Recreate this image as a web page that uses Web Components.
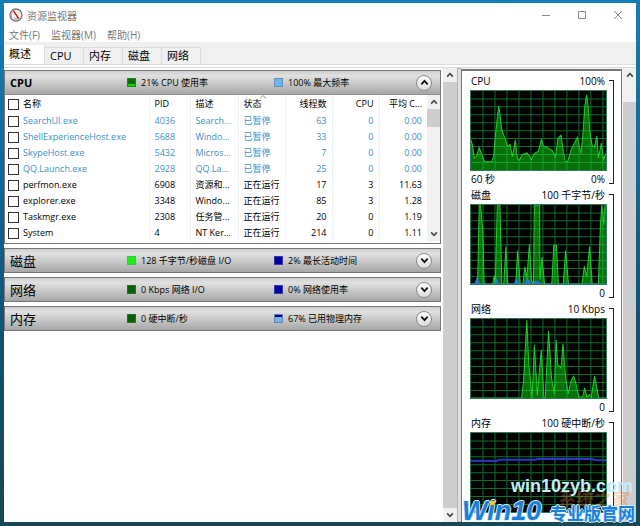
<!DOCTYPE html>
<html lang="zh-CN">
<head>
<meta charset="utf-8">
<title>资源监视器</title>
<style>
  html { height: 100%; }
  body {
    margin: 0; min-height: 100vh; box-sizing: border-box; padding: 3px 4px 4px;
    display: flex; position: relative; overflow: hidden;
    background: linear-gradient(#147fb6, #14699a 30%, #12506f 65%, #174854);
    font-family: "Open Sans", "Noto Sans CJK SC", sans-serif; font-size: 9px; color: #000;
  }
</style>
</head>
<body>
<rm-window>
  <rm-titlebar slot="title">资源监视器</rm-titlebar>
  <rm-menubar slot="menu"></rm-menubar>
  <rm-tabs slot="tabs"></rm-tabs>
  <rm-section slot="main" heading="CPU" bold open c1="grid" t1="21% CPU 使用率" c2="sky" t2="100% 最大频率">
    <rm-process-table></rm-process-table>
  </rm-section>
  <rm-section slot="main" heading="磁盘" c1="lime" t1="128 千字节/秒磁盘 I/O" c2="navy" t2="2% 最长活动时间"></rm-section>
  <rm-section slot="main" heading="网络" c1="dark" t1="0 Kbps 网络 I/O" c2="navy" t2="0% 网络使用率"></rm-section>
  <rm-section slot="main" heading="内存" c1="dark" t1="0 硬中断/秒" c2="part" t2="67% 已用物理内存"></rm-section>
  <rm-graph slot="side" heading="CPU" top="100%" left="60 秒" bottom="0%" kind="cpu"></rm-graph>
  <rm-graph slot="side" heading="磁盘" top="100 千字节/秒" bottom="0" kind="disk"></rm-graph>
  <rm-graph slot="side" heading="网络" top="10 Kbps" bottom="0" kind="net"></rm-graph>
  <rm-graph slot="side" heading="内存" top="100 硬中断/秒" kind="mem"></rm-graph>
</rm-window>
<rm-watermark></rm-watermark>

<script>
const BASE = `*{box-sizing:border-box} button{font:inherit;color:inherit;background:none;border:0;padding:0;margin:0;display:flex;align-items:center;justify-content:center}`;
function define(name, render) {
  customElements.define(name, class extends HTMLElement {
    connectedCallback() {
      if (this.shadowRoot) return;
      const t = document.createElement('template');
      t.innerHTML = render(this);
      this.attachShadow({ mode: 'open' }).append(t.content.cloneNode(true));
    }
  });
}
const chevron = (d, w, s) => `<svg width="${w}" height="${w}" viewBox="0 0 10 10" fill="none" stroke="${s}" stroke-width="2"><path d="${d === 'up' ? 'M1.5 7L5 3.2L8.5 7' : 'M1.5 3L5 6.8L8.5 3'}"/></svg>`;

define('rm-scrollbar', el => `<style>${BASE}
  :host{display:flex;flex-direction:column;background:#f0f0f0}
  button{height:14px;flex:none}
  .track{flex:1;display:flex;flex-direction:column;padding-top:${el.getAttribute('start') || 0}px}
  .thumb{background:#cdcdcd;height:${el.getAttribute('thumb')}}
  </style>
  <button aria-label="向上滚动">${chevron('up', 8, '#404040')}</button>
  <div class="track"><div class="thumb"></div></div>
  ${el.hasAttribute('nodown') ? '' : `<button aria-label="向下滚动">${chevron('down', 8, '#404040')}</button>`}`);

define('rm-titlebar', () => `<style>${BASE}
  :host{display:flex;align-items:center;height:24px;padding-left:5px;font-size:10px;color:#777}
  .name{flex:1;padding-left:4px}
  .icon{display:block}
  button{width:36px;height:24px}
  </style>
  <svg class="icon" width="14" height="14" viewBox="0 0 14 14"><circle cx="7" cy="7" r="6" fill="#f4efed" stroke="#777" stroke-width="1.3"/><path d="M3 9.8A5 5 0 0 1 5.2 2.7" fill="none" stroke="#c9a9a0" stroke-width="1"/><path d="M4 3.2L5.2 2.8L10.3 10.2L9 11Z" fill="#b81414"/><path d="M5 10.8H9" stroke="#999"/></svg>
  <span class="name"><slot></slot></span>
  <button aria-label="最小化"><svg width="10" height="10"><path d="M1 5.5H9" stroke="#888"/></svg></button>
  <button aria-label="最大化"><svg width="10" height="10"><path d="M1.5 1.5H8.5V8.5H1.5Z" fill="none" stroke="#888"/></svg></button>
  <button aria-label="关闭"><svg width="10" height="10"><path d="M1 1L9 9M9 1L1 9" stroke="#888"/></svg></button>`);

define('rm-menubar', () => `<style>${BASE}
  :host{display:flex;height:15px;padding-left:5px;gap:11px;font-size:10px;color:#777}
  </style><button>文件(F)</button><button>监视器(M)</button><button>帮助(H)</button>`);

define('rm-tabs', () => `<style>${BASE}
  :host{display:flex;align-items:flex-end;height:22px;background:#f0f0f0;border-bottom:1px solid #dcdcdc;font-size:11px}
  button{height:17px;width:39px;border:1px solid #dcdcdc;border-left:0;border-bottom:0;justify-content:flex-start;padding:0 0 2px 5px}
  button[aria-selected=true]{height:19px;width:41px;background:#fff;padding-bottom:3px;border-top:0}
  </style>
  <button role="tab" aria-selected="true">概述</button><button role="tab">CPU</button><button role="tab">内存</button><button role="tab">磁盘</button><button role="tab">网络</button>`);

define('rm-section', el => `<style>${BASE}
  :host{display:block;margin-bottom:4px;border:1px solid #777;background:#fff}
  header{height:23px;display:grid;grid-template-columns:117px 147px 1fr auto;align-items:center;padding:0 8px 0 5px;
    background:linear-gradient(#cfcfcf,#e0e0e0 20%,#c8c8c8 55%,#a6a6a6)}
  :host([open]) header{height:24px;border-bottom:1px solid #909090}
  h2{margin:0;font-size:13px;line-height:20px;font-weight:400}
  :host([bold]) h2{font-size:11px;font-weight:700}
  .m{display:flex;align-items:center;gap:5px;white-space:nowrap}
  i{width:9px;height:9px;border:1px solid #555}
  .grid{background:linear-gradient(#0a6e0a 70%,#00e000 70%);border-color:#1a8a1a}
  .lime{background:#1cf01c;border-color:#3cc63c}
  .dark{background:#0a5e0a;border-color:#1a7a1a}
  .sky{background:#6cb4f8;border-color:#6c90b4}
  .navy{background:#0000a8;border-color:#3a3aa0}
  .part{background:linear-gradient(#0000a8 33%,#6cb4f8 33%);border-color:#6c80b0}
  button{width:16px;height:16px;border-radius:50%;border:1px solid #8a8a8a;background:linear-gradient(#fff,#dcdcdc)}
  </style>
  <header><h2>${el.getAttribute('heading')}</h2>
  <span class="m"><i class="${el.getAttribute('c1')}"></i>${el.getAttribute('t1')}</span>
  <span class="m"><i class="${el.getAttribute('c2')}"></i>${el.getAttribute('t2')}</span>
  <button aria-label="${el.hasAttribute('open') ? '折叠' : '展开'}">${chevron(el.hasAttribute('open') ? 'up' : 'down', 9, '#111')}</button></header>
  <slot></slot>`);

const ROWS = [
  ['SearchUI.exe', 4036, 'Search...', '已暂停', 63, 0, '0.00'],
  ['ShellExperienceHost.exe', 5688, 'Windo...', '已暂停', 33, 0, '0.00'],
  ['SkypeHost.exe', 5432, 'Micros...', '已暂停', 7, 0, '0.00'],
  ['QQ.Launch.exe', 2928, 'QQ.La...', '已暂停', 25, 0, '0.00'],
  ['perfmon.exe', 6908, '资源和...', '正在运行', 17, 3, '11.63'],
  ['explorer.exe', 3348, 'Windo...', '正在运行', 85, 3, '1.28'],
  ['Taskmgr.exe', 2308, '任务管...', '正在运行', 20, 0, '1.19'],
  ['System', 4, 'NT Ker...', '正在运行', 214, 0, '1.11']];
define('rm-process-table', () => `<style>${BASE}
  :host{display:flex;padding-bottom:2px}
  table{flex:1;width:100%;table-layout:fixed;border-collapse:collapse}
  th,td{height:16px;padding:0 5px;font-weight:400;text-align:left;white-space:nowrap;overflow:hidden;border-right:1px solid #eaf1f5;line-height:14px}
  th{height:18px}
  th:first-child,td:first-child{padding-left:3px}
  th:nth-child(n+5),td:nth-child(n+5){text-align:right}
  th:last-child,td:last-child{border-right:0}
  .paused{color:#3d8fc4}
  label{display:flex;align-items:center;gap:4px}
  input{appearance:none;width:11px;height:11px;margin:0;border:1px solid #333;background:#fff;flex:none}
  .sort{position:relative}
  .sort svg{position:absolute;left:20px;top:0}
  rm-scrollbar{width:13px}
  </style>
  <table><colgroup><col><col style="width:41px"><col style="width:48px"><col style="width:47px"><col style="width:47px"><col style="width:47px"><col style="width:48px"></colgroup>
  <thead><tr><th><label><input type="checkbox">名称</label></th><th>PID</th><th>描述</th><th class="sort"><svg width="8" height="4" fill="none" stroke="#888"><path d="M1 3.5L4 .5L7 3.5"/></svg>状态</th><th>线程数</th><th>CPU</th><th>平均 C...</th></tr></thead>
  <tbody>${ROWS.map(r => `<tr class="${r[3] === '已暂停' ? 'paused' : ''}"><td><label><input type="checkbox">${r[0]}</label></td>${r.slice(1).map(c => `<td>${c}</td>`).join('')}</tr>`).join('')}</tbody></table>
  <rm-scrollbar thumb="18px"></rm-scrollbar>`);

const area = (pts, fill = '#087008', line = '#22cc22') =>
  `<polygon points="0,243 ${pts} 411,243" fill="${fill}"/><polyline points="${pts}" fill="none" stroke="${line}" vector-effect="non-scaling-stroke"/>`;
const PLOTS = {
  cpu: () => area('0,150 4,165 10,206 17,200 25,174 33,196 42,218 63,218 69,200 75,130 84,46 88,70 93,116 104,148 112,170 119,164 126,202 135,150 141,208 148,212 155,196 171,190 184,210 193,192 205,186 214,150 220,168 236,176 248,184 257,202 265,145 274,136 281,184 287,216 294,218 305,180 324,142 329,168 335,192 341,130 346,50 352,11 357,50 362,128 369,168 376,172 383,138 388,206 397,160 403,210 411,192'),
  disk: () => area('0,243 20,243 24,60 25,0 29,0 36,80 40,243 66,243 71,218 74,240 80,0 88,0 94,243 100,243 106,128 112,243 136,243 142,140 150,243 158,243 164,190 170,225 178,120 184,232 190,243 193,0 209,0 210,230 216,160 224,243 246,243 252,124 260,124 266,243 281,243 288,140 297,243 338,243 345,188 352,220 361,128 369,243 388,243 394,60 398,0 404,60 408,0 411,0')
    + area('0,243 12,243 18,226 26,243 72,243 78,228 83,243 132,243 138,228 144,243 164,243 171,226 180,243 188,243 194,236 208,238 213,243 411,243', '#2868e0', '#3c78e8'),
  net: () => area('0,243 154,243 160,190 170,3 176,140 186,243 193,80 202,235 214,95 222,243 226,243 236,36 245,180 254,230 259,64 264,140 274,150 280,76 288,180 296,230 304,192 312,176 318,192 328,240 340,240 346,212 353,240 360,232 366,240 376,176 389,243 411,243'),
  mem: () => `<polyline points="0,85 80,86 84,82 198,82 204,79 370,80 376,83 411,84" fill="none" stroke="#2638c8" stroke-width="2" vector-effect="non-scaling-stroke"/>`
};
define('rm-graph', el => {
  let g = '';
  for (let i = 1; i < 12; i++) g += `M${i * 36.5} 0V243`;
  for (let i = 1; i < 10; i++) g += `M0 ${i * 24.4}H411`;
  return `<style>${BASE}
  :host{display:grid;grid-template-columns:1fr 5px;column-gap:2px;height:114px;flex:none;font-size:10px;align-content:start}
  .col{min-width:0}
  .line{display:flex;justify-content:space-between;height:17px;line-height:16px;padding:0 2px 0 1px}
  svg{display:block;width:100%;height:81px;background:#000;border:1px solid #2f7c5a}
  .br{border:1px solid #222;border-left:0;height:104px;margin-top:7px;background:#fff}
  </style>
  <div class="col"><div class="line"><span>${el.getAttribute('heading')}</span><span>${el.getAttribute('top')}</span></div>
  <svg viewBox="0 0 411 243" preserveAspectRatio="none" role="img" aria-label="${el.getAttribute('heading')}">${el.getAttribute('kind') === 'mem' ? '' : PLOTS[el.getAttribute('kind')]()}<path d="${g}" stroke="#1ec850" stroke-opacity=".55" fill="none" vector-effect="non-scaling-stroke"/>${el.getAttribute('kind') === 'mem' ? PLOTS.mem() : ''}</svg>
  <div class="line"><span>${el.getAttribute('left') || ''}</span><span>${el.getAttribute('bottom') || ''}</span></div></div><div class="br"></div>`;
});

define('rm-window', () => `<style>${BASE}
  :host{flex:1;min-width:0;height:calc(100vh - 7px);display:flex;flex-direction:column;background:#fff}
  .gap{height:3px;border-bottom:1px solid #d8d8d8;flex:none}
  .body{flex:1;min-height:0;display:flex;background:#f4f4f4}
  main{flex:1;min-width:0;background:#fff;padding:2px 2px 0 0}
  .split{width:4px;background:#e0e0e0;border:1px solid #b4b4b4;border-right:0}
  aside{width:161px;flex:none;background:#fff;border:1px solid #777;border-top-width:2px;border-bottom:0;margin-top:1px;padding:2px 7px 0 8px;overflow:hidden;display:flex;flex-direction:column}
  .s1{width:14px}.s2{width:13px;margin-left:1px}
  </style>
  <slot name="title"></slot><slot name="menu"></slot><slot name="tabs"></slot><div class="gap"></div>
  <div class="body"><main><slot name="main"></slot></main>
  <rm-scrollbar class="s1" thumb="100%"></rm-scrollbar><div class="split"></div>
  <aside><slot name="side"></slot></aside><rm-scrollbar class="s2" start="20" thumb="100%" nodown></rm-scrollbar></div>`);

define('rm-watermark', () => `<style>${BASE}
  :host{position:absolute;right:4px;bottom:0;width:174px;height:52px;pointer-events:none;white-space:nowrap}
  span{position:absolute}
  .url{right:3px;top:2px;font:700 18px/20px "Liberation Sans",sans-serif;color:#c4ecfa}
  .ghost{right:6px;top:14px;font:700 18px/20px "Noto Sans CJK SC",sans-serif;color:#e87830;opacity:.32}
  .win{left:0;bottom:0;font:italic 700 27px/30px "Liberation Sans",sans-serif;color:#1a80d8}
  .cn{right:1px;bottom:0;font:700 17px/26px "Noto Sans CJK SC",sans-serif;color:#1a80d8}
  .win,.cn{text-shadow:1px 0 #d8ecf8,-1px 0 #d8ecf8,0 1px #d8ecf8,0 -1px #d8ecf8}
  .dot{left:28px;top:27px;width:5px;height:4px;background:#f4c430}
  </style>
  <span class="ghost">系统之家</span><span class="url">win10zyb.com</span>
  <span class="win">Win10</span><span class="dot"></span><span class="cn">专业版官网</span>`);
</script>
</body>
</html>
